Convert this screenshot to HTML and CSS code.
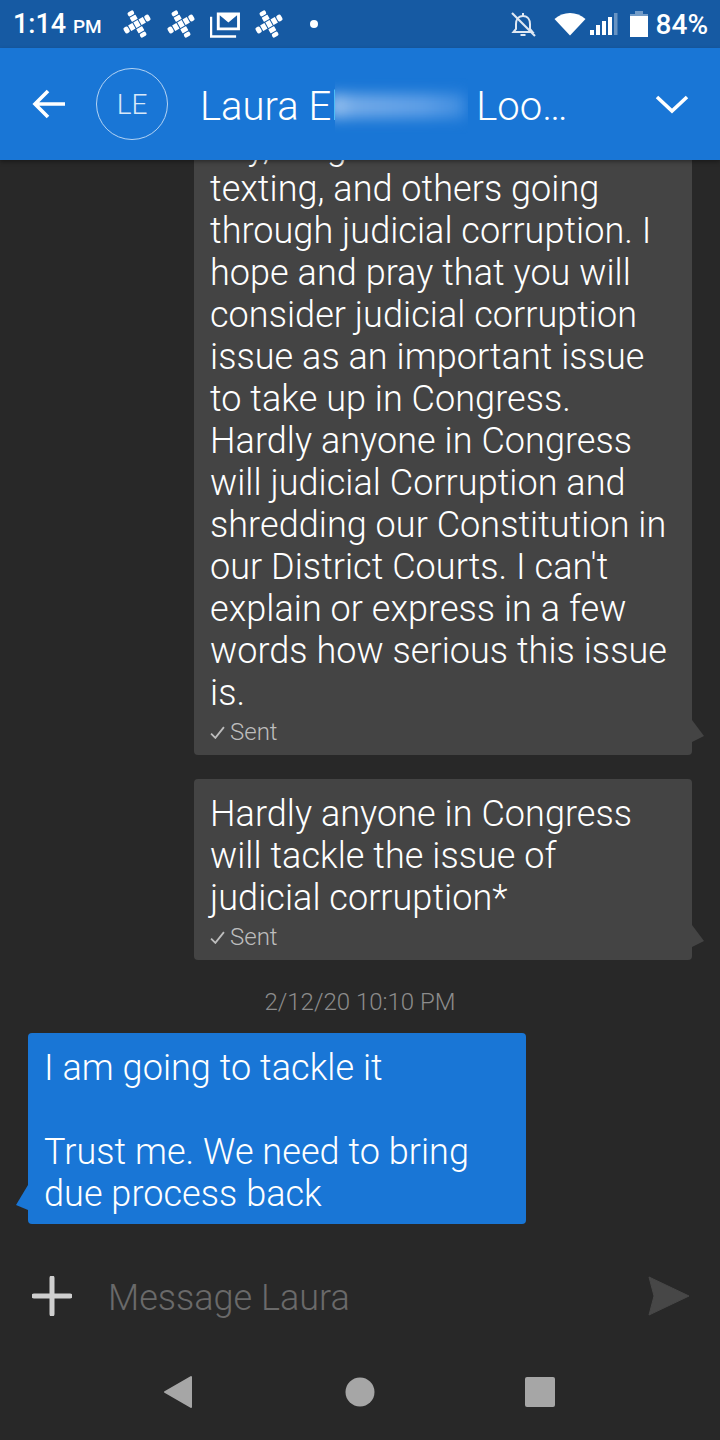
FILE: index.html
```html
<!DOCTYPE html>
<html lang="en">
<head>
  <meta charset="UTF-8">
  <meta name="viewport" content="width=device-width, initial-scale=1.0">
  <title>Message thread</title>
  <link rel="stylesheet" href="styles.css">
</head>
<body>

<div class="phone">

  <div class="status-bar">
    <span class="clock">1:14 <small>PM</small></span>
    <div class="status-left">
      <svg class="ico-x" viewBox="0 0 30 30"><use href="#tiles"/></svg>
      <svg class="ico-x" viewBox="0 0 30 30"><use href="#tiles"/></svg>
      <svg class="ico-mail" viewBox="0 0 32 28">
        <path d="M7 1.500H31V20H7Z M10 4.500V17H28V4.500L19 12Z" fill="#fff" fill-rule="evenodd"/>
        <path d="M1 6V26.500H27" fill="none" stroke="#fff" stroke-width="2.500"/>
      </svg>
      <svg class="ico-x" viewBox="0 0 30 30"><use href="#tiles"/></svg>
      <span class="dot"></span>
    </div>
    <div class="status-right">
      <svg class="ico-bell" viewBox="0 0 28 28">
        <path d="M14 3 L14 6 C9 6 7 10 7 14 V19 L4.500 22 H23.500 L21 19 V14 C21 10 19 6 14 6 M11.500 25 H16.500" fill="none" stroke="#dfe8f3" stroke-width="2"/>
        <path d="M3 3L26 26" stroke="#dfe8f3" stroke-width="2.200"/>
      </svg>
      <svg class="ico-wifi" viewBox="0 0 32 24"><path d="M0.500 7C9 -1 23 -1 31.500 7L16 23.500Z" fill="#fff"/></svg>
      <svg class="ico-signal" viewBox="0 0 28 22">
        <rect x="0" y="17" width="4" height="5" fill="#fff"/>
        <rect x="6" y="12" width="4" height="10" fill="#fff"/>
        <rect x="12" y="8" width="4" height="14" fill="#fff"/>
        <rect x="18" y="4" width="4" height="18" fill="#fff"/>
        <rect x="24" y="0" width="3.500" height="22" fill="#fff" opacity="0.35"/>
      </svg>
      <svg class="ico-batt" viewBox="0 0 18 26">
        <path d="M5 0H13V3H18V26H0V3H5Z" fill="#fff" opacity="0.4"/>
        <path d="M0 5H18V26H0Z" fill="#fff"/>
      </svg>
      <span class="batt-text">84%</span>
    </div>
  </div>

  <header class="app-bar">
    <svg class="ico-back" viewBox="0 0 34 32"><path d="M33 16H4 M16 3L3 16L16 29" fill="none" stroke="#fff" stroke-width="3.600"/></svg>
    <div class="avatar">LE</div>
    <div class="title">Laura E<span class="smudge-wrap">l<span class="smudge"><span class="smudge-ink"></span></span></span><span class="title-end">Loo…</span></div>
    <svg class="ico-down" viewBox="0 0 34 20"><path d="M2 3L17 17L32 3" fill="none" stroke="#fff" stroke-width="3.600"/></svg>
  </header>

  <main class="thread">
    <div class="bubble out">
      <p>say, long<br>texting, and others going<br>through judicial corruption. I<br>hope and pray that you will<br>consider judicial corruption<br>issue as an important issue<br>to take up in Congress.<br>Hardly anyone in Congress<br>will judicial Corruption and<br>shredding our Constitution in<br>our District Courts. I can't<br>explain or express in a few<br>words how serious this issue<br>is.</p>
      <div class="sent"><svg class="ico-check" viewBox="0 0 14 12"><path d="M1 7L5 11L13 1" fill="none" stroke="#bdbdbd" stroke-width="1.700"/></svg>Sent</div>
    </div>

    <div class="bubble out second">
      <p>Hardly anyone in Congress<br>will tackle the issue of<br>judicial corruption*</p>
      <div class="sent"><svg class="ico-check" viewBox="0 0 14 12"><path d="M1 7L5 11L13 1" fill="none" stroke="#bdbdbd" stroke-width="1.700"/></svg>Sent</div>
    </div>

    <div class="stamp">2/12/20 10:10 PM</div>

    <div class="bubble in">
      <p>I am going to tackle it<br><br>Trust me. We need to bring<br>due process back</p>
    </div>
  </main>

  <div class="composer">
    <svg class="ico-plus" viewBox="0 0 40 40"><path d="M20 2V38 M2 20H38" stroke="#cfcfcf" stroke-width="5" stroke-linecap="round"/></svg>
    <span class="placeholder">Message Laura</span>
    <svg class="ico-send" viewBox="0 0 42 40"><path d="M1 1L41 20L1 39L6 20Z" fill="#474747" stroke="#474747" stroke-linejoin="round"/></svg>
  </div>

  <nav class="nav-bar">
    <svg class="ico-nav" viewBox="0 0 32 34"><path d="M27 2V32L1 17Z" fill="#a6a6a6" stroke="#a6a6a6" stroke-width="2" stroke-linejoin="round"/></svg>
    <svg class="ico-nav" viewBox="0 0 32 34"><circle cx="16" cy="17" r="14.500" fill="#a6a6a6"/></svg>
    <svg class="ico-nav" viewBox="0 0 32 34"><rect x="1" y="2" width="30" height="30" rx="2" fill="#a6a6a6"/></svg>
  </nav>

</div>

<svg class="defs" width="0" height="0">
  <defs>
    <g id="tiles" fill="#fff" transform="rotate(-30 15 15)">
      <rect x="0.500" y="11.700" width="5" height="6.600" rx="1.800"/>
      <rect x="6.500" y="11.700" width="5" height="6.600" rx="0.500"/>
      <rect x="12.500" y="11.700" width="5" height="6.600" rx="0.500"/>
      <rect x="18.500" y="11.700" width="5" height="6.600" rx="0.500"/>
      <rect x="24.500" y="11.700" width="5" height="6.600" rx="1.800"/>
      <rect x="11.700" y="0.500" width="6.600" height="4.500" rx="1.800"/>
      <rect x="11.700" y="6" width="6.600" height="4.700" rx="0.500"/>
      <rect x="11.700" y="19.300" width="6.600" height="4.700" rx="0.500"/>
      <rect x="11.700" y="25" width="6.600" height="4.500" rx="1.800"/>
    </g>
  </defs>
</svg>

</body>
</html>
```

FILE: styles.css
```css
* {
  box-sizing: border-box;
}
html, body {
  margin: 0;
  padding: 0;
  background: #282828;
}
.phone {
  width: 720px;
  height: 1440px;
  display: flex;
  flex-direction: column;
  overflow: hidden;
  font-family: Roboto, "Liberation Sans", sans-serif;
  color: #fff;
}
.defs {
  position: absolute;
}

/* status bar */
.status-bar {
  height: 48px;
  flex: none;
  display: flex;
  align-items: center;
  padding: 0 12px 0 13px;
  background: #165aa3;
}
.clock {
  font-size: 27px;
  font-weight: 500;
  width: 109px;
}
.clock small {
  font-size: 19px;
}
.status-left {
  display: flex;
  align-items: center;
}
.ico-x {
  width: 30px;
  height: 30px;
}
.ico-mail {
  width: 31px;
  height: 27px;
  margin: 0 13px 0 14px;
}
.status-left .ico-x:first-child {
  margin-right: 14px;
}
.dot {
  width: 8px;
  height: 8px;
  border-radius: 50%;
  background: #fff;
  margin-left: 26px;
}
.status-right {
  margin-left: auto;
  display: flex;
  align-items: center;
}
.ico-bell {
  width: 28px;
  height: 28px;
  margin-right: 17px;
}
.ico-wifi {
  width: 32px;
  height: 24px;
  margin-right: 4px;
}
.ico-signal {
  width: 28px;
  height: 22px;
  margin-right: 12px;
}
.ico-batt {
  width: 18px;
  height: 26px;
  margin-right: 8px;
}
.batt-text {
  font-size: 28px;
  font-weight: 500;
}

/* app bar */
.app-bar {
  height: 112px;
  flex: none;
  display: flex;
  align-items: center;
  background: #1976d6;
  box-shadow: 0 2px 4px rgba(0, 0, 0, 0.35);
  position: relative;
  z-index: 2;
  padding: 0 31px 0 32px;
}
.ico-back {
  width: 34px;
  height: 32px;
}
.avatar {
  width: 72px;
  height: 72px;
  margin-left: 30px;
  border: 1px solid #b5d4f4;
  border-radius: 50%;
  display: flex;
  align-items: center;
  justify-content: center;
  font-size: 28px;
  font-weight: 300;
  color: #d8e8f9;
}
.title {
  margin-left: 32px;
  padding-top: 4px;
  font-size: 40px;
  font-weight: 300;
  white-space: nowrap;
  display: flex;
  align-items: baseline;
}
.smudge-wrap {
  position: relative;
  width: 10px;
}
.smudge {
  position: absolute;
  left: 4px;
  top: -6px;
  width: 133px;
  height: 58px;
  overflow: hidden;
  background: #1976d6;
}
.smudge-ink {
  display: block;
  margin: 17px 0 0 -6px;
  width: 136px;
  height: 24px;
  background: linear-gradient(90deg, #a5c9f1 0, #74abe8 18%, #5f9fe6 70%, #3f8de0 100%);
  filter: blur(7px);
}
.title-end {
  margin-left: 135px;
}
.ico-down {
  width: 34px;
  height: 20px;
  margin-left: auto;
}

/* thread */
.thread {
  flex: 1;
  min-height: 0;
  display: flex;
  flex-direction: column;
  justify-content: flex-end;
  overflow: hidden;
}
.bubble {
  position: relative;
  flex: none;
  border-radius: 4px;
  padding: 14px 16px 8px;
}
.bubble p {
  margin: 0;
  font-size: 36px;
  font-weight: 300;
  line-height: 42px;
  letter-spacing: 0.05px;
  white-space: nowrap;
}
.bubble::after {
  content: "";
  position: absolute;
  width: 12px;
}
.out {
  width: 498px;
  margin-left: 194px;
  background: #444444;
}
.out::after {
  right: -12px;
  bottom: 13px;
  height: 22px;
  background: #444444;
  clip-path: polygon(0 0, 100% 73%, 0 100%);
}
.second {
  margin-top: 24px;
}
.in {
  width: 498px;
  margin-left: 28px;
  padding-bottom: 9px;
  background: #1976d6;
}
.in::after {
  left: -12px;
  bottom: 14px;
  height: 25px;
  background: #1976d6;
  clip-path: polygon(100% 0, 0 80%, 100% 100%);
}
.sent {
  display: flex;
  align-items: center;
  height: 30px;
  margin-top: 3px;
  font-size: 24px;
  font-weight: 300;
  color: #bdbdbd;
}
.ico-check {
  width: 15px;
  height: 13px;
  margin-right: 5px;
}
.stamp {
  flex: none;
  margin: 28px 0 17px;
  text-align: center;
  font-size: 24px;
  font-weight: 300;
  line-height: 28px;
  color: #8c8c8c;
}

/* composer */
.composer {
  height: 146px;
  flex: none;
  display: flex;
  align-items: flex-start;
  padding: 52px 30px 0 32px;
}
.ico-plus {
  width: 40px;
  height: 40px;
}
.placeholder {
  margin: 1px 0 0 36px;
  font-size: 36px;
  font-weight: 300;
  line-height: 42px;
  color: #6a6a6a;
}
.ico-send {
  width: 42px;
  height: 40px;
  margin-left: auto;
}

/* nav bar */
.nav-bar {
  height: 70px;
  flex: none;
  display: flex;
  justify-content: center;
  gap: 148px;
  padding-top: 5px;
}
.ico-nav {
  width: 32px;
  height: 34px;
}
```
